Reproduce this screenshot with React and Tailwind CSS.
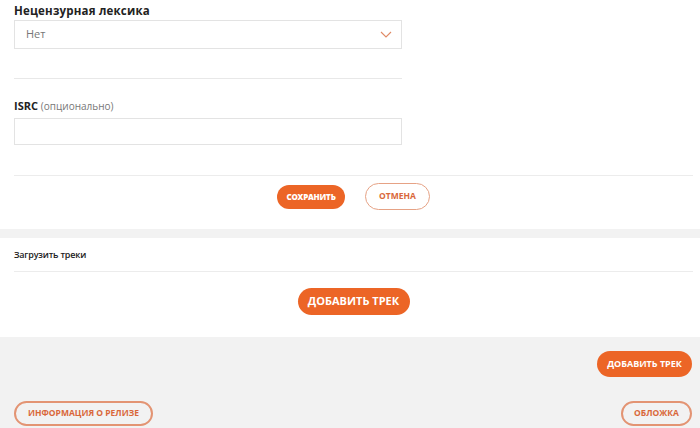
export default function App() {
  const font = { fontFamily: '"Open Sans", "Liberation Sans", sans-serif' };
  return (
    <div className="w-[700px] h-[428px] overflow-hidden bg-[#f2f2f2]" style={font}>
      <div className="bg-white pt-[3px] pl-[14px] pr-[7px] h-[229px]">
        <div className="w-[388px]">
          <div className="text-[11.5px] leading-[16px] font-bold text-[#222] mb-[1px] tracking-[0.2px]">Нецензурная лексика</div>
          <div className="h-[29px] border border-[#e3e3e3] flex items-center justify-between pl-[11px] pr-[9px]">
            <span className="text-[11px] text-[#777]">Нет</span>
            <svg width="12" height="7" viewBox="0 0 12 7" fill="none">
              <path d="M1 1 L6 6 L11 1" stroke="#e08a65" strokeWidth="1.1" />
            </svg>
          </div>
          <div className="mt-[29px] border-t border-[#e8e8e8]" />
          <div className="mt-[20px] text-[11px] leading-[14px] text-[#222]">
            <span className="font-bold">ISRC</span>{" "}
            <span className="text-[10px] text-[#777]">(опционально)</span>
          </div>
          <div className="mt-[5px] h-[27px] border border-[#e3e3e3]" />
        </div>
        <div className="mt-[30px] border-t border-[#ececec]" />
        <div className="flex justify-center items-center gap-[20px] mt-[7px]">
          <button className="h-[24px] w-[68px] rounded-full bg-[#ec6526] text-white text-[8px] font-extrabold tracking-tight">СОХРАНИТЬ</button>
          <button className="h-[27px] w-[65px] rounded-full border border-[#e6a285] text-[#d9683a] text-[8.5px] font-bold">ОТМЕНА</button>
        </div>
      </div>
      <div className="h-[9px]" />
      <div className="bg-white h-[99px] pl-[14px] pr-[7px] pt-[11px]">
        <div className="text-[9px] leading-[12px] text-[#222] font-semibold tracking-[-0.2px]">Загрузить треки</div>
        <div className="mt-[10px] border-t border-[#ececec]" />
        <div className="flex justify-center mt-[16px]">
          <button className="h-[27px] w-[112px] rounded-full bg-[#ec6526] text-white text-[11px] font-bold">ДОБАВИТЬ ТРЕК</button>
        </div>
      </div>
      <div className="pt-[14px] pl-[14px] pr-[8px]">
        <div className="flex justify-end">
          <button className="h-[26px] w-[95px] rounded-full bg-[#ec6526] text-white text-[9px] font-bold">ДОБАВИТЬ ТРЕК</button>
        </div>
        <div className="flex justify-between mt-[24px]">
          <button className="h-[25px] w-[139px] rounded-full border-2 border-[#e39473] text-[#d9683a] text-[8.5px] font-bold">ИНФОРМАЦИЯ О РЕЛИЗЕ</button>
          <button className="h-[25px] w-[71px] rounded-full border-2 border-[#e39473] text-[#d9683a] text-[8.5px] font-bold">ОБЛОЖКА</button>
        </div>
      </div>
    </div>
  );
}
